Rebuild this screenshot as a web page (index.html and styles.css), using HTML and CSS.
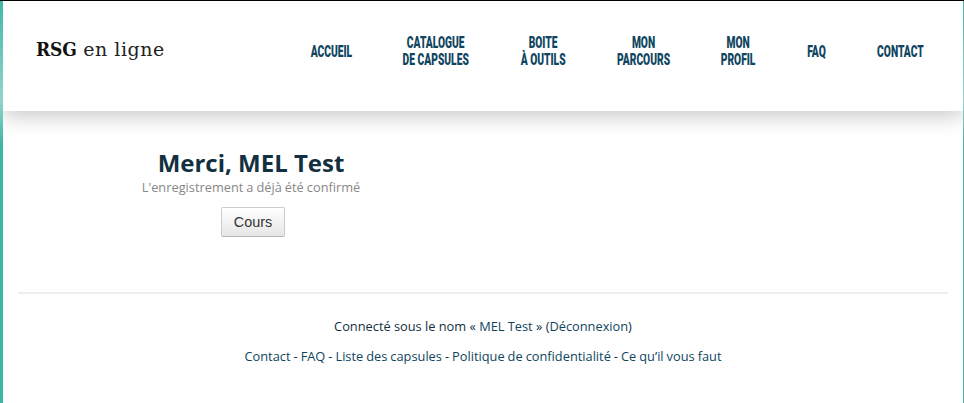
FILE: index.html
```html
<!DOCTYPE html>
<html lang="fr">
<head>
    <meta charset="UTF-8">
    <meta name="viewport" content="width=device-width, initial-scale=1.0">
    <title>RSG en ligne</title>
    <link rel="stylesheet" href="styles.css">
</head>
<body>

    <div class="page">

        <!-- Header -->
        <header class="site-header">
            <a class="logo" href="#"><b>RSG</b> en ligne</a>
            <nav class="main-nav">
                <a href="#"><span>Accueil</span></a>
                <a href="#"><span>Catalogue<br>de capsules</span></a>
                <a href="#"><span>Boite<br>à outils</span></a>
                <a href="#"><span>Mon<br>parcours</span></a>
                <a href="#"><span>Mon<br>profil</span></a>
                <a href="#"><span>FAQ</span></a>
                <a href="#"><span>Contact</span></a>
            </nav>
        </header>

        <!-- Confirmation -->
        <main class="content">
            <div class="confirm">
                <h1>Merci, MEL Test</h1>
                <p>L'enregistrement a déjà été confirmé</p>
                <button type="button">Cours</button>
            </div>
        </main>

        <!-- Footer -->
        <footer class="site-footer">
            <p>Connecté sous le nom « <a href="#">MEL Test</a> » (<a href="#">Déconnexion</a>)</p>
            <p class="footer-links">
                <a href="#">Contact</a> - <a href="#">FAQ</a> - <a href="#">Liste des capsules</a> -
                <a href="#">Politique de confidentialité</a> - <a href="#">Ce qu’il vous faut</a>
            </p>
        </footer>

    </div>

</body>
</html>
```
FILE: styles.css
```css
/* General Styling */
html, body {
    height: 100%;
}

body {
    margin: 0;
    padding: 0 1px 0 3px;
    box-sizing: border-box;
    border-top: 1px solid #000;
    font-family: "Open Sans", sans-serif;
    background: linear-gradient(#3fb8a8 0, #92d4ca 100px, #3fb5a6 145px);
    overflow: hidden;
}

a {
    color: inherit;
    text-decoration: none;
}

.page {
    height: 402px;
    background: #fff;
    overflow: hidden;
}

/* Header */
.site-header {
    display: flex;
    justify-content: space-between;
    align-items: center;
    height: 110px;
    padding: 0 40px 10px 33px;
    box-sizing: border-box;
    background: #fff;
    box-shadow: 0 5px 20px rgba(0,0,0,0.22);
}

.logo {
    margin-top: -5px;
    font-family: "DejaVu Serif", serif;
    font-size: 19px;
    letter-spacing: 0.55px;
    color: #222;
}

.logo b {
    font-family: "DejaVu Serif Condensed", "DejaVu Serif", serif;
    letter-spacing: -0.2px;
    color: #111;
}

/* columns follow the condensed width of each label */
.main-nav {
    display: grid;
    grid-template-columns: 41px 67px 46px 54px 36px 20px 46px;
    gap: 50.33px;
    align-items: center;
}

.main-nav a {
    display: flex;
    justify-content: center;
    font-family: "Roboto", sans-serif;
    font-size: 16px;
    font-weight: 900;
    line-height: 17px;
    text-align: center;
    text-transform: uppercase;
    white-space: nowrap;
    color: #0f4560;
}

.main-nav span {
    flex: none;
    transform: scaleX(0.64);
}

/* Confirmation */
.content {
    height: 181px;
    padding: 38px 0 0 139px;
    box-sizing: border-box;
}

.confirm {
    display: inline-flex;
    flex-direction: column;
    align-items: center;
    width: 218px;
}

.confirm h1 {
    margin: 0;
    font-size: 24px;
    line-height: 28px;
    font-weight: 700;
    white-space: nowrap;
    color: #12303f;
}

.confirm p {
    margin: 0;
    font-size: 12.8px;
    line-height: 20px;
    word-spacing: -0.3px;
    white-space: nowrap;
    color: #888;
}

.confirm button {
    margin: 10px 0 0 4px;
    width: 64px;
    height: 30px;
    font-family: "Liberation Sans", sans-serif;
    font-size: 14.4px;
    color: #333;
    background: linear-gradient(#fff, #e6e6e6);
    border: 1px solid #ccc;
    border-bottom-color: #b8b8b8;
    border-radius: 2px;
}

/* Footer */
.site-footer {
    margin: 0 15px;
    padding-top: 22px;
    border-top: 2px solid #eee;
    text-align: center;
    font-size: 12.8px;
    line-height: 20px;
    color: #12303f;
}

.site-footer p {
    margin: 0 0 10px;
}

.site-footer a {
    color: #0f4560;
}

.footer-links {
    word-spacing: -0.3px;
}
```
